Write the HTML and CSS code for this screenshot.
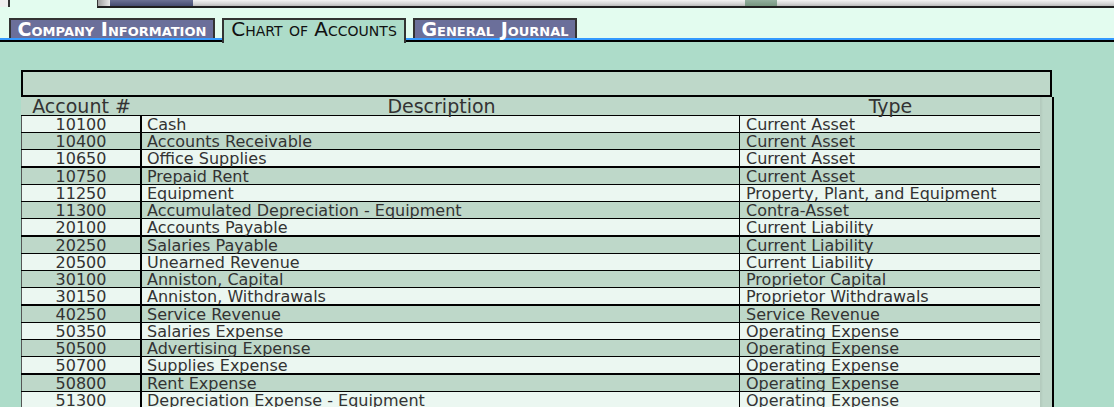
FILE: index.html
```html
<!DOCTYPE html>
<html>
<head>
<meta charset="utf-8">
<title>Chart of Accounts</title>
<link rel="stylesheet" href="styles.css">
</head>
<body>
<div class="topstrip">
  <div class="ts-box"></div>
  <div class="ts-gap"></div>
  <div class="ts-bar">
    <div class="ts-knob"></div>
    <div class="ts-dark"></div>
    <div class="ts-space"></div>
    <div class="ts-green"></div>
    <div class="ts-rest"></div>
  </div>
</div>
<div class="tabs">
  <div class="tab tab-off tab-company">Company Information</div>
  <div class="tab tab-on tab-chart">Chart of Accounts</div>
  <div class="tab tab-off tab-journal">General Journal</div>
</div>
<div class="panel">
  <div class="frame">
    <div class="caption"></div>
    <div class="scroll">
      <div class="grid">
        <div class="hrow">
          <div class="h1">Account #</div>
          <div class="h2">Description</div>
          <div class="h3">Type</div>
        </div>
        <div class="row light"><div class="c1">10100</div><div class="c2">Cash</div><div class="c3">Current Asset</div></div>
        <div class="row dark"><div class="c1">10400</div><div class="c2">Accounts Receivable</div><div class="c3">Current Asset</div></div>
        <div class="row light"><div class="c1">10650</div><div class="c2">Office Supplies</div><div class="c3">Current Asset</div></div>
        <div class="row dark thick"><div class="c1">10750</div><div class="c2">Prepaid Rent</div><div class="c3">Current Asset</div></div>
        <div class="row light"><div class="c1">11250</div><div class="c2">Equipment</div><div class="c3">Property, Plant, and Equipment</div></div>
        <div class="row dark"><div class="c1">11300</div><div class="c2">Accumulated Depreciation - Equipment</div><div class="c3">Contra-Asset</div></div>
        <div class="row light"><div class="c1">20100</div><div class="c2">Accounts Payable</div><div class="c3">Current Liability</div></div>
        <div class="row dark thick"><div class="c1">20250</div><div class="c2">Salaries Payable</div><div class="c3">Current Liability</div></div>
        <div class="row light"><div class="c1">20500</div><div class="c2">Unearned Revenue</div><div class="c3">Current Liability</div></div>
        <div class="row dark"><div class="c1">30100</div><div class="c2">Anniston, Capital</div><div class="c3">Proprietor Capital</div></div>
        <div class="row light"><div class="c1">30150</div><div class="c2">Anniston, Withdrawals</div><div class="c3">Proprietor Withdrawals</div></div>
        <div class="row dark thick"><div class="c1">40250</div><div class="c2">Service Revenue</div><div class="c3">Service Revenue</div></div>
        <div class="row light"><div class="c1">50350</div><div class="c2">Salaries Expense</div><div class="c3">Operating Expense</div></div>
        <div class="row dark"><div class="c1">50500</div><div class="c2">Advertising Expense</div><div class="c3">Operating Expense</div></div>
        <div class="row light"><div class="c1">50700</div><div class="c2">Supplies Expense</div><div class="c3">Operating Expense</div></div>
        <div class="row dark thick"><div class="c1">50800</div><div class="c2">Rent Expense</div><div class="c3">Operating Expense</div></div>
        <div class="row light"><div class="c1">51300</div><div class="c2">Depreciation Expense - Equipment</div><div class="c3">Operating Expense</div></div>
      </div>
      <div class="track"></div>
    </div>
  </div>
</div>
</body>
</html>
```
FILE: styles.css
```css
html, body {
  margin: 0;
  padding: 0;
}
body {
  background: #e3fcef;
  font-family: "DejaVu Sans", Verdana, sans-serif;
  color: #333;
  height: 407px;
  overflow: hidden;
}

/* cropped toolbar remnants at the very top */
.topstrip {
  display: flex;
  height: 8px;
}
.ts-box {
  width: 8px;
  height: 7px;
  background: #efefef;
  border-right: 2px solid #333;
}
.ts-gap {
  width: 87px;
}
.ts-bar {
  flex: 1;
  display: flex;
  height: 6px;
  border-left: 1px solid #333;
  border-bottom: 2px solid #1e1e1e;
  background: linear-gradient(#f2f2f2, #d6d6d6 60%, #b9b9b9);
}
.ts-knob {
  width: 12px;
  background: linear-gradient(90deg, #a0a0a0, #e8e8e8);
}
.ts-dark {
  width: 83px;
  background: linear-gradient(#6b7194, #454c70);
}
.ts-space {
  width: 552px;
}
.ts-green {
  width: 32px;
  background: linear-gradient(#93b09e, #76957f);
}
.ts-rest {
  flex: 1;
}

/* tabs */
.tabs {
  display: flex;
  align-items: flex-start;
  gap: 7px;
  margin-top: 10px;
  padding-left: 9px;
  height: 20px;
  border-bottom: 2px solid #3399ff;
}
.tab {
  box-sizing: border-box;
  border: 2px solid #333;
  border-bottom: 0;
  height: 20px;
  font-variant: small-caps;
  font-size: 19px;
  line-height: 18px;
  text-align: center;
  white-space: nowrap;
}
.tab-off {
  background: #6b6f9a;
  color: #fff;
  font-weight: bold;
}
.tab-on {
  background: #addcc9;
  color: #111;
  font-size: 20px;
  height: 25px;
  position: relative;
  z-index: 1;
}
.tab-company { width: 206px; }
.tab-chart { width: 184px; }
.tab-journal { width: 164px; }

/* panel */
.panel {
  border-top: 2px solid #000;
  background: #addcc9;
  padding: 28px 0 0 21px;
  height: 400px;
}
.frame {
  width: 1033px;
}
.caption {
  width: 1031px;
  height: 27px;
  box-sizing: border-box;
  border: 2px solid #000;
  background: #bed8c9;
}
.scroll {
  display: flex;
  width: 1031px;
  border-right: 2px solid #000;
  height: 320px;
}
.grid {
  width: 1019px;
}
.track {
  width: 12px;
  background: #bdd6c8;
  box-shadow: inset 2px 0 2px rgba(0, 0, 0, 0.05);
}

.hrow {
  display: flex;
  height: 18px;
  background: #bed8c9;
  font-size: 19px;
  line-height: 18px;
  color: #333;
}
.h1 { width: 121px; text-align: center; }
.h2 { width: 599px; text-align: center; }
.h3 { flex: 1; text-align: center; }

.row {
  display: flex;
  height: 16px;
  border-top: 1px solid #000;
  font-size: 16px;
  line-height: 17px;
  white-space: nowrap;
}
.row.thick { border-top-width: 2px; }
.light { background: #ebf7f1; }
.dark { background: #bed8c9; }

.c1 {
  width: 118px;
  border-left: 1px solid #555;
  border-right: 2px solid #000;
  text-align: center;
}
.c2 {
  box-sizing: border-box;
  width: 598px;
  border-right: 1px solid #000;
  padding-left: 5px;
}
.c3 {
  flex: 1;
  padding-left: 6px;
}
```
